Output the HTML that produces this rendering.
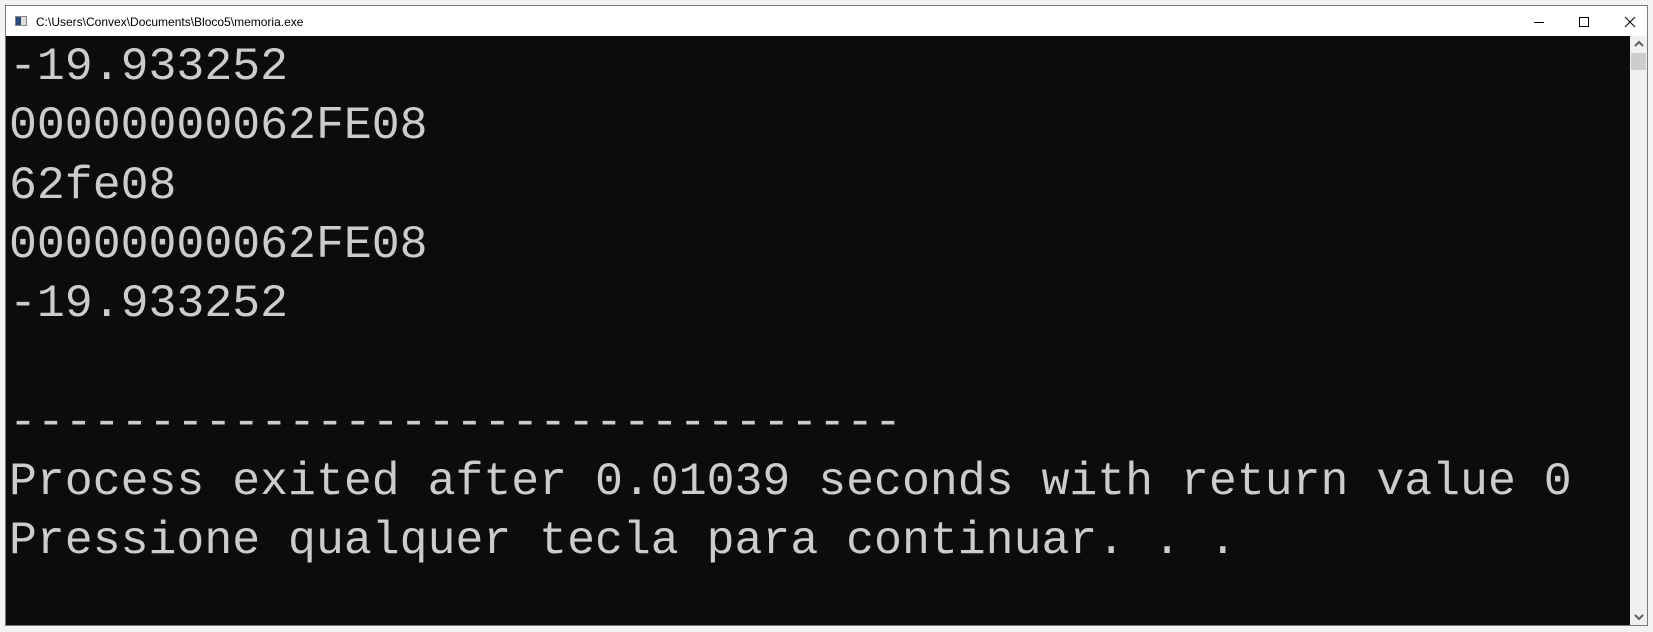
<!DOCTYPE html>
<html><head><meta charset="utf-8"><style>
html,body{margin:0;padding:0;width:1653px;height:632px;background:#f3f3f3;overflow:hidden}
.win{position:absolute;left:5px;top:5px;width:1643px;height:621px;border:1px solid #7a7a7a;background:#fff;box-sizing:border-box}
.title{position:absolute;left:0;top:0;right:0;height:30px;background:#fff;font-family:"Liberation Sans",sans-serif;font-size:12px;color:#000}
.title .t{position:absolute;left:30px;top:9px}
.ico{position:absolute;left:9px;top:10px;width:12px;height:10px;border:1px solid #888;box-sizing:border-box;background:linear-gradient(90deg,#2a4a7a 0 5px,#ddd 5px)}
.con{position:absolute;left:0;top:30px;width:1624px;bottom:0;background:#0c0c0c;color:#cccccc;font-family:"Liberation Mono",monospace;font-size:46.5px;line-height:59.3px;white-space:pre;padding-left:3px;padding-top:1px;box-sizing:border-box;overflow:hidden}
.sb{position:absolute;left:1624px;top:30px;right:0;bottom:0;background:#f0f0f0}
.thumb{position:absolute;left:1px;right:1px;top:17px;height:17px;background:#cdcdcd}
</style></head><body>
<div class="win">
 <div class="title"><div class="ico"></div><span class="t">C:\Users\Convex\Documents\Bloco5\memoria.exe</span>
  <svg style="position:absolute;left:1520px;top:8px" width="120" height="16">
   <line x1="8" y1="8.5" x2="18" y2="8.5" stroke="#000"/>
   <rect x="53.5" y="3.5" width="9" height="9" fill="none" stroke="#000"/>
   <path d="M99 3 L109 13 M109 3 L99 13" stroke="#000"/>
  </svg>
 </div>
 <div class="con">-19.933252
00000000062FE08
62fe08
00000000062FE08
-19.933252

--------------------------------
Process exited after 0.01039 seconds with return value 0
Pressione qualquer tecla para continuar. . .</div>
 <div class="sb"><svg style="position:absolute;left:4px;top:4px" width="10" height="8"><path d="M1 6 L5 2 L9 6" stroke="#606060" stroke-width="2" fill="none"/></svg><div class="thumb"></div>
 <svg style="position:absolute;left:4px;bottom:4px" width="10" height="8"><path d="M1 2 L5 6 L9 2" stroke="#606060" stroke-width="2" fill="none"/></svg></div>
</div>
</body></html>
